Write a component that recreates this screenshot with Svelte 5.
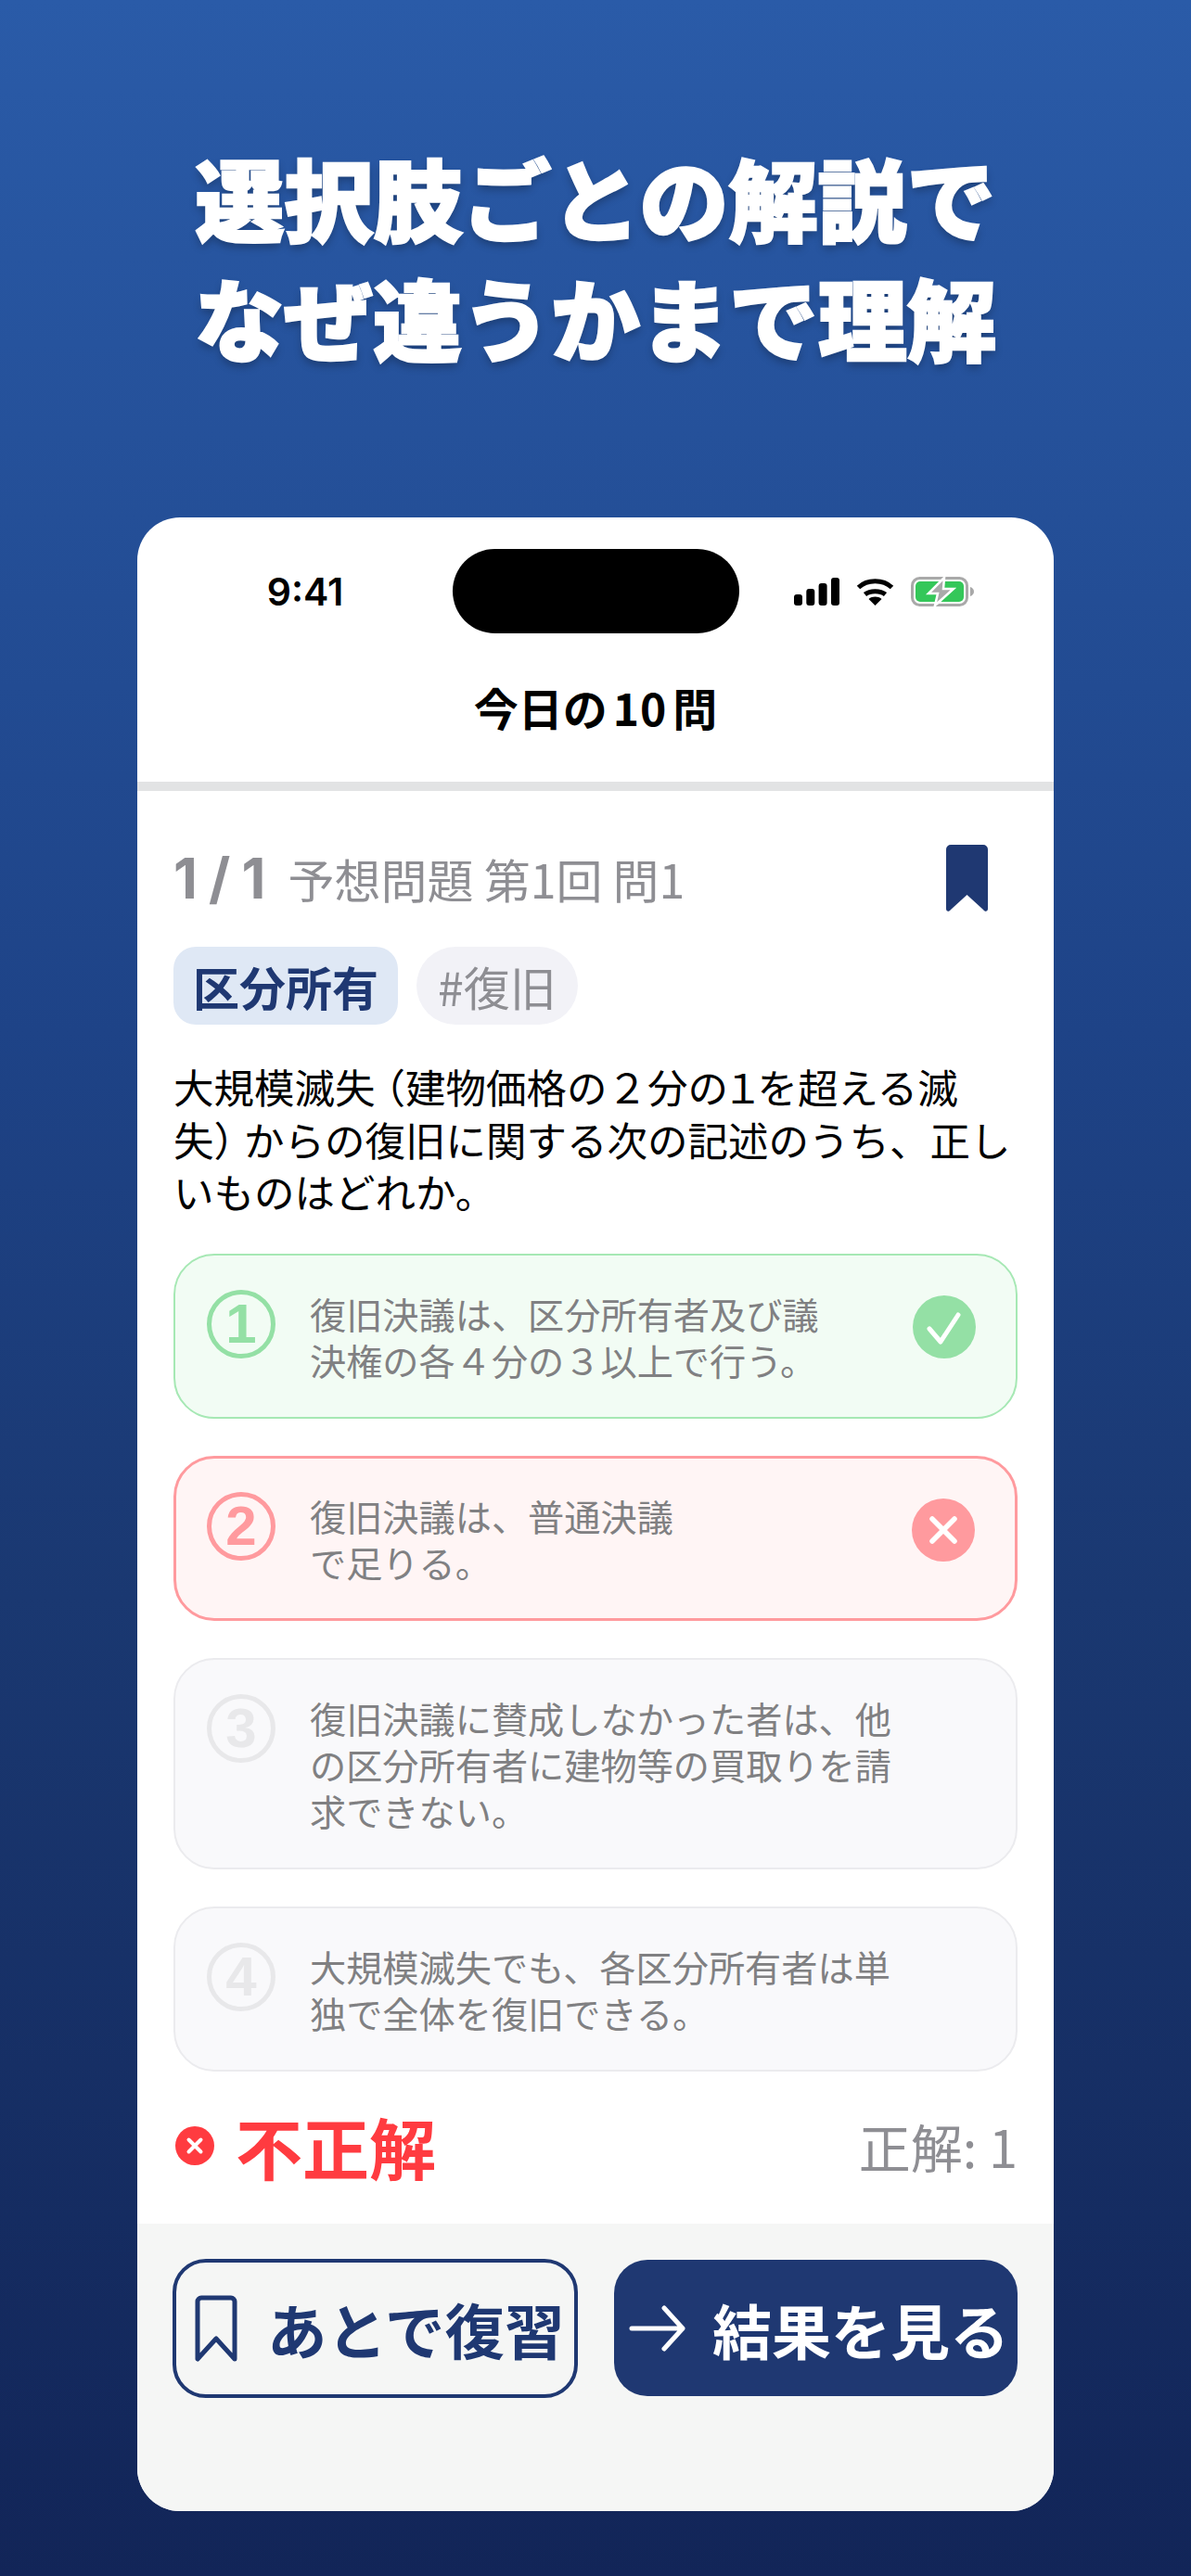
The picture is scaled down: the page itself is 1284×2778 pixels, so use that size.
<script lang="ts">
    type Option = {
        no: number;
        lines: string[];
        state: 'correct' | 'wrong' | 'idle';
    };

    // Answer choices, line breaks follow the design
    const options: Option[] = [
        { no: 1, lines: ['復旧決議は、区分所有者及び議', '決権の各４分の３以上で行う。'], state: 'correct' },
        { no: 2, lines: ['復旧決議は、普通決議', 'で足りる。'], state: 'wrong' },
        { no: 3, lines: ['復旧決議に賛成しなかった者は、他', 'の区分所有者に建物等の買取りを請', '求できない。'], state: 'idle' },
        { no: 4, lines: ['大規模滅失でも、各区分所有者は単', '独で全体を復旧できる。'], state: 'idle' }
    ];
</script>

<div class="page">
    <header class="headline">
        <h1>選択肢ごとの解説で<br />なぜ違うかまで理解</h1>
    </header>

    <main class="phone">
        <div class="status">
            <span class="time">9:41</span>
            <span class="island"></span>
            <span class="status-icons">
                <svg width="49" height="30" viewBox="0 0 49 30" fill="#000">
                    <rect x="0" y="18" width="9" height="12" rx="3" />
                    <rect x="13.3" y="12" width="9" height="18" rx="3" />
                    <rect x="26.6" y="6" width="9" height="24" rx="3" />
                    <rect x="40" y="0" width="9" height="30" rx="3" />
                </svg>
                <svg width="41" height="30" viewBox="0 0 41 30">
                    <path d="M2.5 10.5C12 1.5 29 1.5 38.5 10.5" fill="none" stroke="#000" stroke-width="5" />
                    <path d="M9.5 18C15 13.5 26 13.5 31.5 18" fill="none" stroke="#000" stroke-width="5" />
                    <path d="M20.5 30 13.5 23C17.5 19.8 23.5 19.8 27.5 23Z" fill="#000" />
                </svg>
                <svg width="68" height="32" viewBox="0 0 68 32">
                    <rect x="1.5" y="1.5" width="59" height="29" rx="8" fill="none" stroke="#a9a9a9" stroke-width="3" />
                    <rect x="5" y="5" width="52" height="22" rx="5" fill="#34c759" />
                    <path d="M64 11c2.500.8 4 2.700 4 5s-1.500 4.200-4 5z" fill="#a9a9a9" />
                    <path d="M36 1 19 18h10l-3 13 20-18H35z" fill="#a9a9a9" stroke="#fff" stroke-width="2.500" />
                </svg>
            </span>
        </div>

        <div class="nav-title">今日の<span class="digits">10</span>問</div>
        <div class="divider"></div>

        <section class="content">
            <div class="meta">
                <span class="count">1 / 1</span>
                <span class="source">予想問題 第1回 問1</span>
                <svg class="mark" width="45" height="72" viewBox="0 0 45 72" fill="#1f3872">
                    <path d="M5 0H40a5 5 0 0 1 5 5V69c0 3-3 4-5 1L22.500 54 5 70c-2 3-5 2-5-1V5a5 5 0 0 1 5-5z" />
                </svg>
            </div>

            <div class="tags">
                <span class="tag category">区分所有</span>
                <span class="tag hash">#復旧</span>
            </div>

            <p class="question">
                大規模滅失<span class="open">（</span>建物価格の２分の<span class="one">１</span>を超える滅<br />失<span class="close">）</span>からの復旧に関する次の記述のうち、正し<br />いものはどれか。
            </p>

            <ul class="options">
                {#each options as opt}
                    <li class="option {opt.state}">
                        <span class="no">{opt.no}</span>
                        <span class="text">
                            {#each opt.lines as line}
                                <span class="line">{line}</span>
                            {/each}
                        </span>
                        {#if opt.state === 'correct'}
                            <svg class="badge" width="68" height="68" viewBox="0 0 68 68">
                                <circle cx="34" cy="34" r="34" fill="#94e0a5" />
                                <path d="M18 36l12 14 19-29" fill="none" stroke="#fff" stroke-width="5" stroke-linecap="round" stroke-linejoin="round" />
                            </svg>
                        {:else if opt.state === 'wrong'}
                            <svg class="badge" width="68" height="68" viewBox="0 0 68 68">
                                <circle cx="34" cy="34" r="34" fill="#ff9a9e" />
                                <path d="M22 22l24 24M46 22 22 46" fill="none" stroke="#fff" stroke-width="5.500" stroke-linecap="round" />
                            </svg>
                        {/if}
                    </li>
                {/each}
            </ul>

            <div class="result">
                <svg width="42" height="42" viewBox="0 0 42 42">
                    <circle cx="21" cy="21" r="21" fill="#ff3b40" />
                    <path d="M14.500 14.500l13 13M27.500 14.500l-13 13" fill="none" stroke="#fff" stroke-width="4" stroke-linecap="round" />
                </svg>
                <span class="verdict">不正解</span>
                <span class="answer">正解: 1</span>
            </div>
        </section>

        <footer class="actions">
            <button class="btn later" type="button">
                <svg width="46" height="72" viewBox="0 0 46 72">
                    <path d="M3 69V7a4 4 0 0 1 4-4h32a4 4 0 0 1 4 4v62L23 47z" fill="none" stroke="#1f3872" stroke-width="5" stroke-linejoin="round" />
                </svg>
                あとで復習
            </button>
            <button class="btn next" type="button">
                <svg width="61" height="50" viewBox="0 0 61 50">
                    <path d="M3 25H58M38 3l20 22-20 22" fill="none" stroke="#fff" stroke-width="5" stroke-linecap="round" stroke-linejoin="round" />
                </svg>
                結果を見る
            </button>
        </footer>
    </main>
</div>

<style>
    :global(body) {
        margin: 0;
    }

    .page {
        width: 1284px;
        height: 2778px;
        display: flex;
        flex-direction: column;
        overflow: hidden;
        background: linear-gradient(180deg, #2a5ba8 0%, #1e4387 40%, #1a3871 62%, #122558 100%);
        font-family: "Noto Sans CJK JP", "Noto Sans", sans-serif;
    }

    .headline {
        height: 558px;
        box-sizing: border-box;
        padding-top: 147px;
        flex-shrink: 0;
    }

    h1 {
        margin: 0;
        text-align: center;
        color: #fff;
        font-size: 96px;
        font-weight: 900;
        line-height: 129px;
        -webkit-text-stroke: 2.5px #fff;
        text-shadow: 0 5px 10px rgba(0, 0, 0, 0.28);
    }

    .phone {
        width: 988px;
        height: 2150px;
        margin-left: 148px;
        display: flex;
        flex-direction: column;
        background: #fff;
        border-radius: 46px;
        overflow: hidden;
    }

    .status {
        display: grid;
        grid-template-columns: 340px 309px 1fr;
        align-items: center;
        padding-top: 34px;
    }

    .time {
        font-family: Inter, sans-serif;
        font-size: 41px;
        font-weight: 600;
        color: #000;
        text-align: center;
        padding-left: 22px;
    }

    .island {
        height: 91px;
        background: #000;
        border-radius: 46px;
    }

    .status-icons {
        display: flex;
        align-items: center;
        gap: 18px;
        padding-left: 59px;
    }

    .nav-title {
        height: 158px;
        padding-bottom: 2px;
        display: flex;
        align-items: center;
        justify-content: center;
        font-size: 48px;
        font-weight: 700;
        color: #000;
    }

    .digits {
        padding: 0 6px;
        letter-spacing: 1px;
    }

    .divider {
        height: 10px;
        background: #e2e3e4;
    }

    .content {
        padding: 58px 39px 48px 39px;
    }

    .meta {
        display: flex;
        align-items: center;
        height: 72px;
        color: #8e8e93;
    }

    .count {
        font-family: Inter, sans-serif;
        font-size: 60px;
        font-weight: 700;
        margin-right: 25px;
        letter-spacing: -1px;
    }

    .source {
        font-size: 50px;
    }

    .mark {
        margin-left: auto;
        margin-right: 32px;
    }

    .tags {
        display: flex;
        gap: 20px;
        margin-top: 38px;
    }

    .tag {
        display: flex;
        align-items: center;
        height: 84px;
        font-size: 50px;
    }

    .category {
        padding: 0 21px;
        background: #dfe8f5;
        border-radius: 24px;
        color: #1f3872;
        font-weight: 700;
    }

    .hash {
        padding: 0 23px;
        background: #f2f2f7;
        border-radius: 42px;
        color: #8e8e93;
    }

    .question {
        margin: 39px 0 0;
        font-size: 43.5px;
        line-height: 56.500px;
        color: #000;
    }

    .open {
        margin-left: -11px;
    }

    .close {
        margin-right: -11px;
    }

    .one {
        margin: 0 -6px;
    }

    .options {
        list-style: none;
        margin: 38px 0 0;
        padding: 0;
        display: flex;
        flex-direction: column;
        gap: 40px;
    }

    .option {
        position: relative;
        display: flex;
        align-items: flex-start;
        gap: 37px;
        padding: 37px 34px;
        border: 2px solid #ebebee;
        border-radius: 44px;
        background: #f9f9fb;
    }

    .option.correct {
        background: #f2fcf4;
        border-color: #a6e8b4;
    }

    .option.wrong {
        background: #fff5f5;
        border-color: #ff9a9e;
        border-width: 3px;
        padding: 36px 33px;
    }

    .no {
        width: 74px;
        height: 74px;
        box-sizing: border-box;
        flex-shrink: 0;
        display: flex;
        align-items: center;
        justify-content: center;
        border: 5px solid #e8e8ea;
        border-radius: 50%;
        color: #e8e8ea;
        font-family: "Liberation Sans", sans-serif;
        font-size: 60px;
        font-weight: 700;
    }

    .correct .no {
        border-color: #94e0a5;
        color: #94e0a5;
    }

    .wrong .no {
        border-color: #ff9a9e;
        color: #ff9a9e;
    }

    .text {
        display: block;
        font-size: 39.2px;
        line-height: 50px;
        color: #808082;
    }

    .line {
        display: block;
    }

    .badge {
        position: absolute;
        right: 43px;
        top: 43px;
    }

    .result {
        display: flex;
        align-items: center;
        height: 72px;
        margin-top: 44px;
        padding-left: 2px;
    }

    .verdict {
        margin-left: 23px;
        font-size: 72px;
        font-weight: 700;
        color: #ff3b40;
    }

    .answer {
        margin-left: auto;
        font-size: 56px;
        color: #8e8e93;
    }

    .actions {
        flex: 1;
        display: grid;
        grid-template-columns: 437px 435px;
        gap: 39px;
        align-content: start;
        align-items: center;
        padding: 38px 0 0 38px;
        background: #f5f6f5;
    }

    .btn {
        display: flex;
        align-items: center;
        box-sizing: border-box;
        border-radius: 36px;
        font-family: inherit;
        font-weight: 700;
        white-space: nowrap;
    }

    .later {
        height: 150px;
        gap: 32px;
        padding: 0 0 0 20px;
        font-size: 64.5px;
        background: transparent;
        border: 4px solid #1f3872;
        color: #1f3872;
    }

    .next {
        height: 147px;
        gap: 29px;
        padding: 0 0 0 16px;
        font-size: 64px;
        background: #1f3872;
        border: none;
        color: #fff;
    }
</style>
